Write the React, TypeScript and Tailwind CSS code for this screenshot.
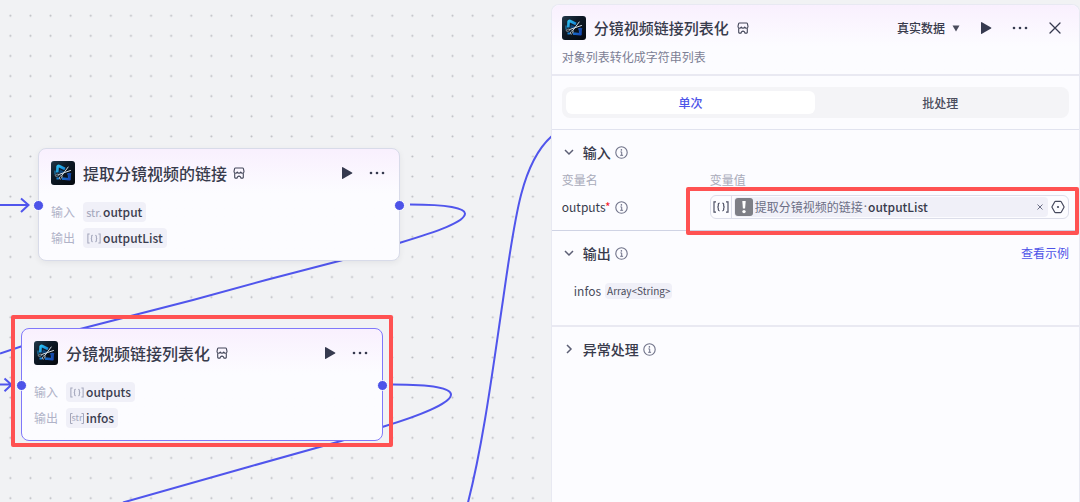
import React, { useState } from "react";

type VarType = "str" | "object[]" | "str[]";

interface FlowNodeProps {
  title: string;
  input: { type: VarType; name: string };
  output: { type: VarType; name: string };
  selected?: boolean;
  className: string;
}

const PluginLogo: React.FC = () => (
  <svg viewBox="0 0 24 24" className="size-6 shrink-0" aria-hidden="true">
    <defs>
      <linearGradient id="logo-bg" x1="0" y1="0" x2="1" y2="1">
        <stop offset="0" stopColor="#22394a" />
        <stop offset="0.4" stopColor="#0d1926" />
        <stop offset="1" stopColor="#04070d" />
      </linearGradient>
      <linearGradient id="logo-play" x1="0" y1="0" x2="1" y2="1">
        <stop offset="0" stopColor="#2cc0f2" />
        <stop offset="0.45" stopColor="#1583d6" />
        <stop offset="1" stopColor="#1748b4" />
      </linearGradient>
    </defs>
    <rect width="24" height="24" rx="3" fill="url(#logo-bg)" />
    <path
      d="M6.300 11.500 6.600 5.500Q7 4.500 8 5L14 8M11 17.800Q15 17.500 18.500 18.200L17.800 12M6.800 16.500v2"
      fill="none"
      stroke="url(#logo-play)"
      strokeWidth="2.600"
      strokeLinejoin="round"
    />
    <path d="M9 8.500 14 11l-3.500 2.500L8 11.500z" fill="#0f5fae" opacity=".6" />
    <path d="M4 9.500v4" stroke="#1b8fd0" strokeWidth="1" />
    <path d="M15.800 12.500 20.300 12l-1 5.500z" fill="#1548a8" />
    <path
      d="M17.200 6 10.600 14.800M19.500 9.500 7.500 13.600"
      stroke="#d5dde3"
      strokeWidth="1"
      strokeLinecap="round"
    />
    <ellipse cx="9.700" cy="16.400" rx="1.900" ry="1.100" fill="none" stroke="#b9c5ce" strokeWidth="0.8" transform="rotate(-55 9.700 16.400)" />
    <ellipse cx="6" cy="14.200" rx="1.900" ry="1" fill="none" stroke="#93a2ae" strokeWidth="0.8" transform="rotate(-15 6 14.200)" />
  </svg>
);

const StoreIcon: React.FC = () => (
  <svg
    viewBox="0 0 12 12"
    className="size-3 shrink-0 text-[#44475a]"
    fill="none"
    stroke="currentColor"
    strokeWidth="1.100"
    strokeLinejoin="round"
    aria-hidden="true"
  >
    <path d="M2.400 1h7.200q.6 0 .8.600l.6 2.800q0 1.800-1.600 1.800-1.300 0-1.700-1.200Q7.300 6.200 6 6.200T4.300 5Q3.900 6.200 2.600 6.200 1 6.200 1 4.400l.6-2.800q.2-.6.800-.6z" />
    <path d="M1.700 6.200v4.300q0 .6.600.6h1.800l.4-1.300q1.500-1.400 3 0l.4 1.300h1.800q.6 0 .6-.6V6.200" />
  </svg>
);

const PlayIcon: React.FC = () => (
  <svg viewBox="0 0 12 12" className="size-3" fill="#363a4f" aria-hidden="true">
    <path d="M1 .4q0-.5.5-.3l9.500 5.400q.8.5 0 1L1.500 11.900q-.5.200-.5-.3z" />
  </svg>
);

const MoreIcon: React.FC = () => (
  <svg viewBox="0 0 16 4" className="h-1 w-4" fill="#363a4f" aria-hidden="true">
    <circle cx="2" cy="2" r="1.300" />
    <circle cx="8" cy="2" r="1.300" />
    <circle cx="14" cy="2" r="1.300" />
  </svg>
);

const InfoIcon: React.FC = () => (
  <svg viewBox="0 0 13 13" className="size-[13px] shrink-0 text-[#6f7289]" fill="none" stroke="currentColor" aria-hidden="true">
    <circle cx="6.500" cy="6.500" r="5.700" strokeWidth="1.100" />
    <circle cx="6.400" cy="3.900" r=".8" fill="currentColor" stroke="none" />
    <path d="M5.400 5.900h1.300v3.300M5.200 9.300h2.900" />
  </svg>
);

const BracesIcon: React.FC<{ className: string }> = ({ className }) => (
  <svg viewBox="0 0 16 12" className={className} fill="none" stroke="currentColor" strokeWidth="1.200" aria-hidden="true">
    <path d="M3 .8H1v10.400H3M13 .8h2v10.400H13" />
    <path d="M6.600 2.200q-1.300 0-1.300 1.200v1.400q0 1.200-1 1.200 1 0 1 1.200v1.400q0 1.200 1.300 1.200M9.400 2.200q1.300 0 1.300 1.200v1.400q0 1.200 1 1.200-1 0-1 1.200v1.400q0 1.200-1.300 1.200" />
  </svg>
);

const VarTypeMark: React.FC<{ type: VarType }> = ({ type }) => {
  if (type === "str") {
    return <span className="text-[11px] leading-4">str.</span>;
  }
  if (type === "object[]") {
    return <BracesIcon className="h-[11px] w-[14px]" />;
  }
  return (
    <>
      <svg viewBox="0 0 14 11" className="absolute h-[11px] w-[14px]" fill="none" stroke="currentColor" aria-hidden="true">
        <path d="M2.500.5h-2v10h2M11.500.5h2v10h-2" />
      </svg>
      <span className="text-[9px] leading-4">str</span>
    </>
  );
};

const VarRow: React.FC<{ label: string; type: VarType; name: string }> = ({ label, type, name }) => (
  <div className="flex items-center gap-2 text-xs">
    <span className="text-[#b0b3c8]">{label}</span>
    <span className="flex h-5 items-center gap-0.5 rounded bg-[#f0f0f8] px-1">
      <span className="relative flex w-[14px] items-center justify-center text-[#a3a6bb]">
        <VarTypeMark type={type} />
      </span>
      <span className="font-medium text-[#3b3d4f]">{name}</span>
    </span>
  </div>
);

const FlowNode: React.FC<FlowNodeProps> = ({ title, input, output, selected, className }) => (
  <article
    className={`absolute w-[362px] rounded-lg border bg-[#fcfcff] bg-linear-to-b from-[#f9f0fe] to-[#fcfcff] to-40% px-3 pt-3 pb-3 ${
      selected ? "border-[#8078fa]" : "border-[#d8dbe9] shadow-[0_2px_6px_rgba(0,0,0,0.06)]"
    } ${className}`}
  >
    <header className="flex h-6 items-center">
      <PluginLogo />
      <h2 className="mr-1.5 ml-2 text-base leading-6 font-medium text-[#383b4c]">{title}</h2>
      <StoreIcon />
      <div className="mr-0.5 ml-auto flex items-center gap-4">
        <button type="button" aria-label="运行">
          <PlayIcon />
        </button>
        <button type="button" aria-label="更多" className="flex h-6 items-center">
          <MoreIcon />
        </button>
      </div>
    </header>
    <div className="mt-[17px] flex flex-col gap-1.5">
      <VarRow label="输入" {...input} />
      <VarRow label="输出" {...output} />
    </div>
    <span className="absolute top-[51px] -left-1.5 size-[11px] rounded-full border border-white bg-[#4d53e8]" />
    <span className="absolute top-[51px] -right-1.5 size-[11px] rounded-full border border-white bg-[#4d53e8]" />
  </article>
);

const Canvas: React.FC = () => (
  <main className="relative min-w-0 flex-1">
    {/* Connections between nodes */}
    <svg className="absolute inset-0 size-full" aria-hidden="true">
      <g fill="none" stroke="#5055ec" strokeWidth="2">
        <path d="M0 205H28M21 198.500l7.500 6.500-7.500 7" />
        <path d="M410 204.500C448 204.500 465 208 465 213.500 465 222 437 231.500 400 242.700 381 248.500 361 255 341 260.500L266 280 193 300 80 329 21 346.500 0 353.500" />
        <path d="M0 384.500H11M4.500 378.500l7 6.200-7 6.500" />
        <path d="M393 384.500C434 384.500 451 388.500 451 394.500 451 403 420 415.500 383 426.700 370 431 356 436.500 341 441L250 466.500 123 502.500" />
        <path d="M468 502.500C484 440 494 360 503 300 515 215 522 162 552 136" />
      </g>
    </svg>
    <FlowNode
      title="提取分镜视频的链接"
      input={{ type: "str", name: "output" }}
      output={{ type: "object[]", name: "outputList" }}
      className="top-[148px] left-[38px]"
    />
    <FlowNode
      title="分镜视频链接列表化"
      input={{ type: "object[]", name: "outputs" }}
      output={{ type: "str[]", name: "infos" }}
      selected
      className="top-[328px] left-[21px]"
    />
    <div className="pointer-events-none absolute top-[315px] left-[11px] h-[132px] w-[382px] rounded-xs border-4 border-[#ff5252]" />
  </main>
);

interface SectionProps {
  title: string;
  defaultOpen?: boolean;
  action?: React.ReactNode;
  children?: React.ReactNode;
}

const Section: React.FC<SectionProps> = ({ title, defaultOpen = false, action, children }) => {
  const [open, setOpen] = useState(defaultOpen);

  return (
    <section className="px-2.5 pt-2.5 text-xs">
      <div className="flex items-center justify-between">
        <button
          type="button"
          aria-expanded={open}
          onClick={() => setOpen(!open)}
          className="flex h-6 items-center"
        >
          <svg
            viewBox="0 0 14 14"
            className={`size-[14px] ${open ? "" : "-rotate-90"}`}
            fill="none"
            stroke="#5c5f75"
            strokeWidth="1.500"
            aria-hidden="true"
          >
            <path d="m3 5 4 4 4-4" />
          </svg>
          <span className="mr-1 ml-[7px] text-sm font-medium text-[#383b4c]">{title}</span>
          <InfoIcon />
        </button>
        {action}
      </div>
      {open && children}
    </section>
  );
};

const DetailPanel: React.FC = () => {
  const [mode, setMode] = useState<"single" | "batch">("single");

  const tabClass = (active: boolean) =>
    `flex-1 rounded-md font-medium ${active ? "bg-white text-[#4d53e8]" : "text-[#4a4c5c]"}`;

  return (
    <aside className="relative mt-1 w-[49%] shrink-0 rounded-t-lg border-x border-t border-[#e8e9f2] bg-[#fcfcff]">
      <header className="rounded-t-lg border-b-2 border-[#e9e9f2] bg-linear-to-b from-[#f9f0fe] to-[#fcfcff] to-60% px-2.5 pt-[11px] pb-2">
        <div className="flex h-6 items-center">
          <PluginLogo />
          <h1 className="mr-2 ml-2 text-[15px] leading-6 font-medium text-[#383b4c]">分镜视频链接列表化</h1>
          <StoreIcon />
          <div className="mr-[7px] ml-auto flex items-center">
            <div className="relative flex items-center">
              <select
                aria-label="数据来源"
                className="appearance-none bg-transparent pr-[14px] text-xs font-medium text-[#383b4c]"
              >
                <option>真实数据</option>
              </select>
              <svg viewBox="0 0 8 7" className="pointer-events-none absolute right-0 h-[7px] w-2" fill="#4a4c5c" aria-hidden="true">
                <path d="M.5.500h7L4 6.500z" />
              </svg>
            </div>
            <button type="button" aria-label="运行" className="ml-5">
              <PlayIcon />
            </button>
            <button type="button" aria-label="更多" className="mx-5 flex h-6 items-center">
              <MoreIcon />
            </button>
            <button type="button" aria-label="关闭">
              <svg viewBox="0 0 14 14" className="size-[14px]" stroke="#363a4f" strokeWidth="1.300" strokeLinecap="round" aria-hidden="true">
                <path d="m2 2 10 10M12 2 2 12" />
              </svg>
            </button>
          </div>
        </div>
        <p className="mt-2 text-xs leading-[18px] text-[#7c7f95]">对象列表转化成字符串列表</p>
      </header>

      <div className="border-b border-[#e1e3ef] px-2.5 py-[11px]">
        <div role="tablist" className="flex h-[31px] rounded-lg bg-[#f4f4f7] p-1 text-xs">
          <button
            type="button"
            role="tab"
            aria-selected={mode === "single"}
            onClick={() => setMode("single")}
            className={tabClass(mode === "single")}
          >
            单次
          </button>
          <button
            type="button"
            role="tab"
            aria-selected={mode === "batch"}
            onClick={() => setMode("batch")}
            className={tabClass(mode === "batch")}
          >
            批处理
          </button>
        </div>
      </div>

      <Section title="输入" defaultOpen>
        <div className="mt-[7px] grid grid-cols-[148px_1fr] items-center gap-y-1.5 pb-[11px]">
          <span className="leading-[18px] text-[#a9abba]">变量名</span>
          <span className="leading-[18px] text-[#a9abba]">变量值</span>
          <div className="flex items-center gap-1">
            <span id="outputs-label" className="text-[#383b4c]">
              outputs<span className="text-[#f5222d]">*</span>
            </span>
            <InfoIcon />
          </div>
          <div className="relative min-w-0">
            <div
              role="group"
              aria-labelledby="outputs-label"
              className="flex h-6 items-center rounded-md border border-[#dcdeea] pl-0.5"
            >
              <span className="flex h-full items-center border-r border-[#dcdeea] pr-0.5 text-[#4f5267]">
                <BracesIcon className="h-3 w-4" />
              </span>
              <div className="ml-0.5 flex h-5 min-w-0 flex-1 items-center rounded bg-[#f0f0f8] pl-px">
                <svg viewBox="0 0 18 18" className="size-[18px] shrink-0" aria-hidden="true">
                  <rect width="18" height="18" rx="3" fill="#7e7f86" />
                  <path d="M7.300 3h3.400l-.6 7.500H7.900z" fill="#fff" />
                  <circle cx="9" cy="13.600" r="1.700" fill="#fff" />
                </svg>
                <span className="ml-0.5 truncate text-[#6b6e85]">提取分镜视频的链接</span>
                <span className="mx-px font-['Noto_Sans',sans-serif] text-[#6b6e85]">·</span>
                <span className="font-medium text-[#383b4c]">outputList</span>
                <button type="button" aria-label="清除" className="mr-1 ml-auto">
                  <svg viewBox="0 0 8 8" className="size-2" stroke="#6b6e85" aria-hidden="true">
                    <path d="m1.500 1.500 5 5M6.500 1.500l-5 5" />
                  </svg>
                </button>
              </div>
              <button type="button" aria-label="设置" className="mx-[3px]">
                <svg viewBox="0 0 14 14" className="size-[14px]" fill="none" stroke="#45485c" strokeWidth="1.200" aria-hidden="true">
                  <path d="M4.600 1.300h4.800q.5 0 .8.500l2.700 4.700q.3.500 0 1l-2.700 4.700q-.3.500-.8.500H4.600q-.5 0-.8-.5L1.100 7.500q-.3-.5 0-1l2.700-4.700q.3-.5.8-.5z" />
                  <circle cx="7" cy="7" r="1.100" fill="#45485c" stroke="none" />
                </svg>
              </button>
            </div>
            <div className="pointer-events-none absolute -top-2 -right-2.5 -bottom-4 -left-6 rounded-xs border-4 border-[#ff5252]" />
          </div>
        </div>
      </Section>

      <div className="border-t border-[#cfd3e4]">
        <Section
          title="输出"
          defaultOpen
          action={
            <a href="#example" className="text-[#4d53e8]">
              查看示例
            </a>
          }
        >
          <div className="mt-4 flex items-center gap-1 pb-6 pl-3">
            <span className="leading-5 text-[#4a4c5c]">infos</span>
            <span className="rounded bg-[#f0f0f8] px-0.5 text-[10px] leading-4 text-[#4a4c5c]">
              Array&lt;String&gt;
            </span>
          </div>
        </Section>
      </div>

      <div className="border-t-2 border-[#e9e9f2]">
        <Section title="异常处理" />
      </div>
    </aside>
  );
};

const App: React.FC = () => (
  <div className="relative flex min-h-screen overflow-hidden bg-[#f1f2f4] font-['Noto_Sans_CJK_SC',sans-serif]">
    {/* Dot grid */}
    <svg className="absolute inset-0 size-full" aria-hidden="true">
      <defs>
        <pattern id="dots" width="20.100" height="20.100" x="0.300" y="5.700" patternUnits="userSpaceOnUse">
          <circle cx="10.050" cy="10.050" r="1" fill="#b9bbc0" />
        </pattern>
      </defs>
      <rect width="100%" height="100%" fill="url(#dots)" />
    </svg>
    <Canvas />
    <DetailPanel />
  </div>
);

export default App;
